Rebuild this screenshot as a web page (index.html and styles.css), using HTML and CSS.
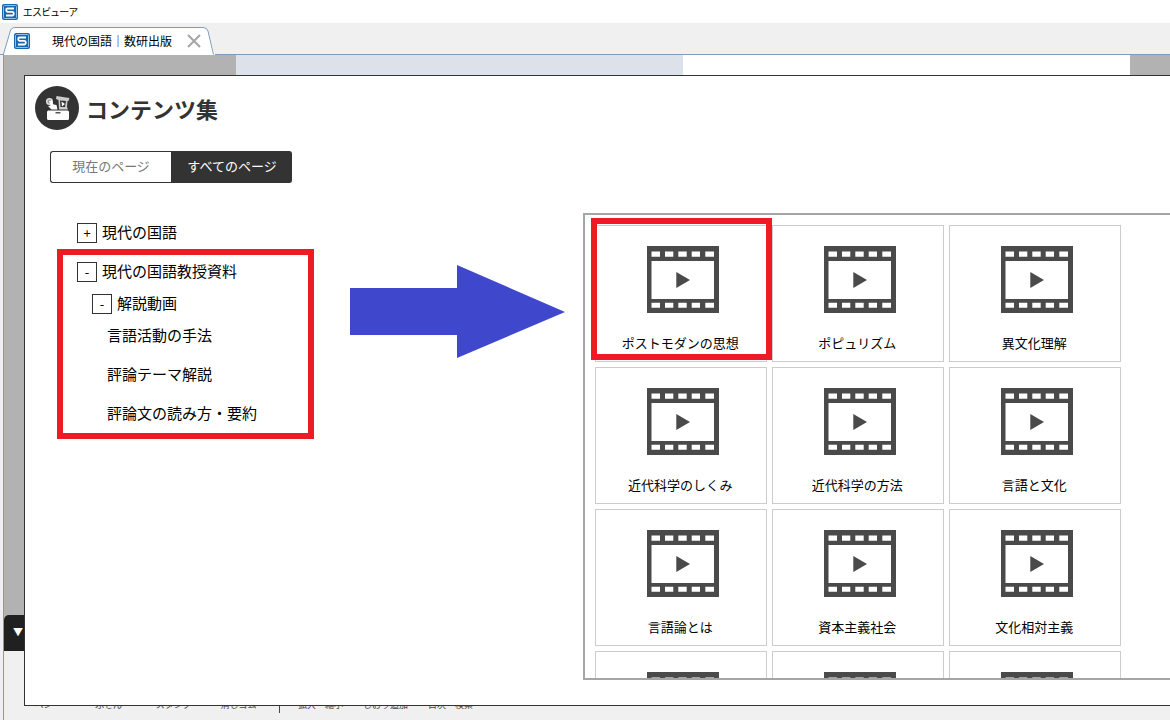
FILE: index.html
```html
<!DOCTYPE html>
<html lang="ja">
<head>
<meta charset="utf-8">
<title>エスビューア</title>
<link rel="stylesheet" href="styles.css">
</head>
<body>
<svg class="defs" width="0" height="0" aria-hidden="true">
  <symbol id="logo" viewBox="0 0 16 16">
    <rect x="0" y="0" width="16" height="16" rx="2" fill="#1768b0"/>
    <rect x="1.5" y="1.5" width="13" height="13" rx="1" fill="none" stroke="#8fc0e6"/>
    <path d="M12 4.5H5.5Q4.2 4.5 4.2 6T5.5 7.8H10.5Q11.8 7.8 11.8 9.5T10.5 11.5H4" fill="none" stroke="#fff" stroke-width="1.8"/>
  </symbol>
  <symbol id="film" viewBox="-2 0 78 67">
    <path fill="#4a4a4a" fill-rule="evenodd" d="M4 0H76V67.500H4ZM8.500 15V53H71V15ZM8.500 5.500V10.800H17V5.500ZM22 5.500V10.800H30.300V5.500ZM35.300 5.500V10.800H43.700V5.500ZM48.700 5.500V10.800H57V5.500ZM62.300 5.500V10.800H71V5.500ZM8.500 56.800V61.800H17V56.800ZM22 56.800V61.800H30.300V56.800ZM35.300 56.800V61.800H43.700V56.800ZM48.700 56.800V61.800H57V56.800ZM62.300 56.800V61.800H71V56.800ZM33.300 26L47 34L33.300 42Z"/>
  </symbol>
</svg>
<div class="app">
  <header class="titlebar"><svg class="logo"><use href="#logo"/></svg><span>エスビューア</span></header>
  <nav class="tabs">
    <div class="tab">
      <svg class="tab-shape" viewBox="0 0 212 32" aria-hidden="true"><path d="M0.500 32V27L7 5Q8 .5 12 .5H200Q204 .5 205 4L212 28V32Z" fill="#fff"/><path d="M.5 32V27L7 5Q8 .5 12 .5H200Q204 .5 205 4L210.500 27.500" fill="none" stroke="#7f9db9"/></svg>
      <svg class="logo"><use href="#logo"/></svg>
      <span class="tab-name">現代の国語｜数研出版</span>
      <button class="tab-close" aria-label="閉じる"><svg viewBox="0 0 14 14"><path d="M1 1L13 13M13 1L1 13" stroke="#a5a5a5" stroke-width="2"/></svg></button>
    </div>
  </nav>
  <main class="viewer">
    <div class="stage">
      <div class="page page-left"></div><div class="page page-right"></div>
      <button class="drawer" aria-label="ツールバー">▼</button>
    </div>
    <footer class="toolbar">
      <span class="tool">ペン</span><span class="tool">ふせん</span><span class="tool">スタンプ</span><span class="tool">消しゴム</span><span class="rule"></span><span class="tool">拡大・縮小</span><span class="tool">しおり追加</span><span class="tool">目次・検索</span>
    </footer>
    <section class="dialog" aria-labelledby="heading">
      <div class="dialog-head">
        <svg class="badge" viewBox="0 0 44 44" aria-hidden="true">
          <circle cx="22" cy="22" r="22" fill="#333"/>
          <rect x="12" y="24.500" width="22" height="9.500" rx="1.500" fill="#fff"/>
          <rect x="20.500" y="26" width="5" height="1.500" fill="#555"/>
          <circle cx="14.500" cy="15.500" r="2.800" fill="#999" stroke="#ddd" stroke-width="1.500"/>
          <path d="M14 15L16.500 14.500L18.500 18.500L21.500 19L22.500 23.500H16.500L13 20L15.500 19.500Z" fill="#fff"/>
          <path d="M21.500 10L34.500 12L33.500 15L32.500 15L32 21L33 23.500H24L23.500 14L21 13Z" fill="#ccc"/>
          <path d="M25 14.500L31 15L30 21H25.500Z" fill="#333"/>
          <path d="M26.500 15.500L30 18L27 20.500Z" fill="#fff"/>
        </svg>
        <h1 id="heading">コンテンツ集</h1>
      </div>
      <div class="switch"><button>現在のページ</button><button class="on">すべてのページ</button></div>
      <div class="content">
        <div class="side">
          <div class="row"><button class="fold">+</button><span class="name">現代の国語</span></div>
          <div class="group">
            <div class="row"><button class="fold">-</button><span class="name">現代の国語教授資料</span></div>
            <div class="row level2"><button class="fold">-</button><span class="name">解説動画</span></div>
            <div class="leaves">
              <a class="row name" href="#">言語活動の手法</a>
              <a class="row name" href="#">評論テーマ解説</a>
              <a class="row name" href="#">評論文の読み方・要約</a>
            </div>
            <div class="mark"></div>
          </div>
          <svg class="arrow" viewBox="0 0 215 93" aria-hidden="true"><path d="M0 23H107V0L215 47L107 93V70H0Z" fill="#3f48cc"/></svg>
        </div>
        <div class="panel">
          <div class="cards">
            <a class="card" href="#"><svg class="film"><use href="#film"/></svg><span>ポストモダンの思想</span><i class="mark"></i></a>
            <a class="card" href="#"><svg class="film"><use href="#film"/></svg><span>ポピュリズム</span></a>
            <a class="card" href="#"><svg class="film"><use href="#film"/></svg><span>異文化理解</span></a>
            <a class="card" href="#"><svg class="film"><use href="#film"/></svg><span>近代科学のしくみ</span></a>
            <a class="card" href="#"><svg class="film"><use href="#film"/></svg><span>近代科学の方法</span></a>
            <a class="card" href="#"><svg class="film"><use href="#film"/></svg><span>言語と文化</span></a>
            <a class="card" href="#"><svg class="film"><use href="#film"/></svg><span>言語論とは</span></a>
            <a class="card" href="#"><svg class="film"><use href="#film"/></svg><span>資本主義社会</span></a>
            <a class="card" href="#"><svg class="film"><use href="#film"/></svg><span>文化相対主義</span></a>
            <a class="card" href="#"><svg class="film"><use href="#film"/></svg></a>
            <a class="card" href="#"><svg class="film"><use href="#film"/></svg></a>
            <a class="card" href="#"><svg class="film"><use href="#film"/></svg></a>
          </div>
        </div>
      </div>
    </section>
  </main>
</div>
</body>
</html>
```
FILE: styles.css
```css
* { box-sizing: border-box; }
body { margin: 0; font-family: "Noto Sans CJK JP", sans-serif; color: #000; background: #f0f0f0; }
button { font: inherit; padding: 0; border: 0; background: none; color: inherit; }
a { color: inherit; text-decoration: none; }
svg { display: block; flex: none; }
.defs { position: absolute; }
.app { height: 100vh; display: flex; flex-direction: column; overflow: hidden; }
.logo { width: 16px; height: 16px; }

.titlebar { height: 23px; flex: none; display: flex; align-items: center; gap: 5px; padding: 0 2px; background: #fff; font-size: 10px; line-height: 16px; font-feature-settings: "palt"; }
.tabs { height: 32px; flex: none; padding: 4px 0 0 3px; border-bottom: 1px solid #7f9db9; }
.tab { position: relative; width: 212px; height: 28px; display: flex; align-items: center; padding: 0 11px; font-size: 12px; }
.tab > * { position: relative; }
.tab .tab-shape { position: absolute; left: 0; top: 0; width: 212px; height: 32px; }
.tab-name { margin-left: 22px; line-height: 20px; }
.tab-close { margin-left: 15px; }
.tab-close svg { width: 14px; height: 14px; }

.viewer { position: relative; flex: 1; min-height: 0; margin-left: 3px; border-left: 1px solid #7f9db9; display: flex; flex-direction: column; }
.stage { position: relative; flex: 1; display: flex; padding: 0 40px 0 232px; background: #b2b2b2; }
.page { flex: 1; }
.page-left { background: #dde1ea; }
.page-right { background: #fff; }
.drawer { position: absolute; left: 0; bottom: 0; width: 60px; height: 36px; padding: 0 0 3px 9px; border-radius: 5px 5px 0 0; background: #202020; color: #fff; font-size: 10px; text-align: left; }
.toolbar { height: 69px; flex: none; display: flex; align-items: flex-end; padding: 0 7px 7px; color: #444; font-size: 9px; line-height: 16px; }
.tool { width: 65px; text-align: center; }
.rule { width: 1px; height: 16px; margin: 0 8px; background: #444; }

.dialog { position: absolute; left: 20px; right: 0; top: 20px; bottom: 14px; display: flex; flex-direction: column; padding: 10px 0 25px; border: 1px solid #333; border-right: 0; background: #fff; }
.dialog-head { display: flex; align-items: center; gap: 7px; padding-left: 10px; }
.badge { width: 44px; height: 44px; }
h1 { margin: 0; font-size: 22px; line-height: 32px; font-weight: 700; color: #333; }
.switch { display: flex; margin: 21px 0 0 25px; }
.switch button { width: 121px; height: 32px; padding-bottom: 2px; border: 1px solid #333; border-right: 0; border-radius: 3px 0 0 3px; font-size: 13px; line-height: 20px; color: #777; }
.switch .on { border-radius: 0 3px 3px 0; background: #333; color: #fff; }
.content { flex: 1; min-height: 0; margin-top: 30px; display: grid; grid-template-columns: minmax(0, 39fr) minmax(0, 41fr); }
.side { position: relative; padding: 4px 0 0 52px; font-size: 15px; }
.row { height: 32px; display: flex; align-items: center; gap: 5px; line-height: 24px; }
.name { padding-bottom: 2px; }
.group { position: relative; width: 220px; margin-top: 7px; }
.level2 { margin-left: 15px; }
.leaves { display: grid; gap: 7px; margin-left: 30px; }
.fold { width: 20px; height: 20px; border: 1px solid #333; font-size: 13px; line-height: 16px; }
.mark { position: absolute; border: 6px solid #ed1c24; }
.group .mark { top: -7px; right: -17px; bottom: -9px; left: -20px; }
.arrow { position: absolute; left: 325px; top: 52px; width: 215px; height: 93px; }
.panel { overflow: hidden; padding: 10px; border: 2px solid #a5a5a5; border-right: 0; }
.cards { display: grid; grid-template-columns: repeat(auto-fill, 172px); gap: 5px; }
.card { position: relative; height: 137px; display: flex; flex-direction: column; align-items: center; gap: 20px; padding: 20px 2px 0 0; border: 1px solid #ccc; font-size: 13px; line-height: 20px; }
.film { width: 78px; height: 67px; }
.card .mark { top: -8px; right: -6px; bottom: 1px; left: -5px; }
```
